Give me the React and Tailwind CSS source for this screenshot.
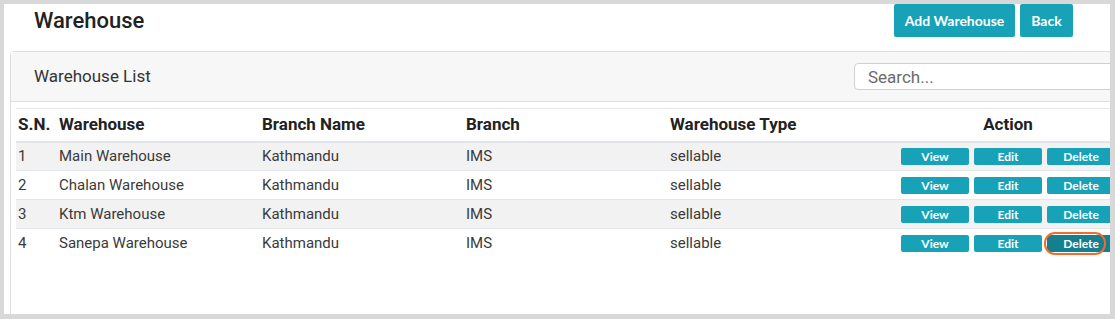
const ROWS = [
  { sn: 1, name: "Main Warehouse", branchName: "Kathmandu", branch: "IMS", type: "sellable" },
  { sn: 2, name: "Chalan Warehouse", branchName: "Kathmandu", branch: "IMS", type: "sellable" },
  { sn: 3, name: "Ktm Warehouse", branchName: "Kathmandu", branch: "IMS", type: "sellable" },
  { sn: 4, name: "Sanepa Warehouse", branchName: "Kathmandu", branch: "IMS", type: "sellable", highlight: true },
];

function ActionButton({ label, dark }) {
  return (
    <button
      className={`block h-[17px] w-[68px] rounded-[2px] text-[12px] font-bold leading-[17px] text-white ${
        dark ? "bg-[#137f8f]" : "bg-[#17a2b8]"
      }`}
    >
      {label}
    </button>
  );
}

export default function App() {
  return (
    <div
      className="h-[319px] w-[1115px] bg-[#d8d8d8] pb-[5px] pl-[4px] pr-[5px] pt-[4px]"
      style={{ fontFamily: "Roboto, 'Liberation Sans', sans-serif" }}
    >
      <div className="h-full overflow-hidden bg-white">
        <div className="flex h-[33px] items-center pl-[30px] pr-[37px]">
          <h1 className="text-[22px] font-medium text-[#222]">Warehouse</h1>
          <div className="ml-auto flex h-full gap-[5px] font-['Lato',sans-serif] text-[14px] font-bold text-white">
            <button className="w-[121px] rounded-[2px] bg-[#17a2b8]">Add Warehouse</button>
            <button className="w-[53px] rounded-[2px] bg-[#17a2b8]">Back</button>
          </div>
        </div>

        <div className="ml-[6px] mt-[14px] w-[1125px] rounded-[4px] border border-[#dedede]">
          <div className="flex h-[50px] items-center border-b border-[#dedede] bg-[#f7f7f7] pl-[23px]">
            <span className="text-[17px] text-[#333]">Warehouse List</span>
            <input
              placeholder="Search..."
              className="ml-auto mr-[10px] h-[27px] w-[270px] rounded-[4px] border border-[#d0d0d0] bg-white pl-[13px] text-[17px] text-[#333] placeholder:text-[#6b6b6b]"
            />
          </div>

          <div className="px-[5px] pb-[60px] pt-[6px]">
            <table className="w-[1102px] table-fixed border-collapse border-t border-[#e3e7ec] text-[15px] text-[#3a3a3a]">
              <colgroup>
                <col className="w-[40px]" />
                <col className="w-[203px]" />
                <col className="w-[204px]" />
                <col className="w-[204px]" />
                <col className="w-[231px]" />
                <col className="w-[220px]" />
              </colgroup>
              <thead>
                <tr className="h-[33px] border-b-2 border-[#e1e4e8] text-left text-[17px] font-bold text-[#222]">
                  <th className="px-[2px]">S.N.</th>
                  <th className="px-[3px]">Warehouse</th>
                  <th className="px-[3px]">Branch Name</th>
                  <th className="px-[3px]">Branch</th>
                  <th className="px-[3px]">Warehouse Type</th>
                  <th className="px-[3px] text-center">Action</th>
                </tr>
              </thead>
              <tbody>
                {ROWS.map((row, i) => (
                  <tr
                    key={row.sn}
                    className={`h-[29px] border-t border-[#e3e7ec] ${i % 2 === 0 ? "bg-[#f2f2f2]" : "bg-white"}`}
                  >
                    <td className="px-[2px]">{row.sn}</td>
                    <td className="px-[3px]">{row.name}</td>
                    <td className="px-[3px]">{row.branchName}</td>
                    <td className="px-[3px]">{row.branch}</td>
                    <td className="px-[3px]">{row.type}</td>
                    <td className="px-[3px]">
                      <div className="flex items-center gap-[5px] font-['Lato',sans-serif]">
                        <ActionButton label="View" />
                        <ActionButton label="Edit" />
                        <div className="relative">
                          <ActionButton label="Delete" dark={row.highlight} />
                          {row.highlight && (
                            <span className="absolute left-[-3px] top-[-3px] h-[23px] w-[62px] rounded-[11px] border-2 border-[#f26b2f]" />
                          )}
                        </div>
                      </div>
                    </td>
                  </tr>
                ))}
              </tbody>
            </table>
          </div>
        </div>
      </div>
    </div>
  );
}
